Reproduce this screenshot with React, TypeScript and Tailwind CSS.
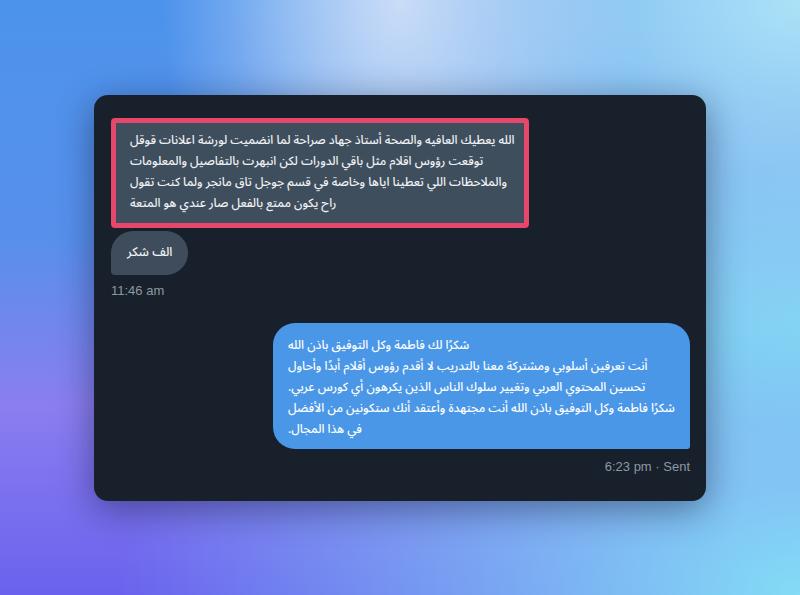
import React from "react";

const font = "font-['Liberation_Sans','DejaVu_Sans',Arial,sans-serif]";
const arabic = "font-['Noto_Sans_Arabic','Noto_Naskh_Arabic','DejaVu_Sans',sans-serif]";

function Lines({ lines }: { lines: string[] }) {
  return (
    <>
      {lines.map((l, i) => (
        <React.Fragment key={i}>
          {l}
          {i < lines.length - 1 && <br />}
        </React.Fragment>
      ))}
    </>
  );
}

export default function App() {
  const redLines = [
    "الله يعطيك العافيه والصحة أستاذ جهاد صراحة لما انضميت لورشة اعلانات قوقل",
    "توقعت رؤوس اقلام مثل باقي الدورات لكن انبهرت بالتفاصيل والمعلومات",
    "والملاحظات اللي تعطينا اياها وخاصة في قسم جوجل تاق مانجر ولما كنت تقول",
    "راح يكون ممتع بالفعل صار عندي هو المتعة",
  ];
  const blueLines = [
    "شكرًا لك فاطمة وكل التوفيق باذن الله",
    "أنت تعرفين أسلوبي ومشتركة معنا بالتدريب لا أقدم رؤوس أقلام أبدًا وأحاول",
    "تحسين المحتوي العربي وتغيير سلوك الناس الذين يكرهون أي كورس عربي.",
    "شكرًا فاطمة وكل التوفيق باذن الله أنت مجتهدة وأعتقد أنك ستكونين من الأفضل",
    "في هذا المجال.",
  ];
  return (
    <div
      className={`${font} w-[800px] h-[595px] flex items-center justify-center bg-[radial-gradient(ellipse_at_50%_0%,#cadcf7_0%,rgba(202,220,247,0)_42%),radial-gradient(ellipse_at_100%_0%,#ace2f7_0%,rgba(172,226,247,0)_50%),radial-gradient(ellipse_at_100%_100%,#84dcf6_0%,rgba(132,220,246,0)_60%),radial-gradient(ellipse_at_100%_55%,#6cc4f0_0%,rgba(108,196,240,0)_35%),linear-gradient(180deg,#4c93ec_0%,#5790ec_40%,#8a7ef0_68%,#6a62ee_100%)] overflow-hidden`}
    >
      <div className="w-[612px] h-[406px] rounded-[14px] bg-[#18202b] shadow-[0_8px_36px_rgba(10,15,40,0.45)] px-4 pt-[23px] flex flex-col">
        <div className="flex flex-col items-start">
          <div className="ml-px w-[418px] border-[5px] border-[#e6476b] rounded-[4px] bg-[#3f4e5d] pl-[14px] pt-[7px] pb-[9px]">
            <div dir="rtl" className={`${arabic} font-medium text-[12px] leading-[21px] text-[#f0f2f5] whitespace-nowrap text-left`}>
              <Lines lines={redLines} />
            </div>
          </div>
          <div dir="rtl" className={`${arabic} font-medium mt-[3px] ml-px h-[44px] px-[16px] flex items-center bg-[#3e4c5b] rounded-tr-[22px] rounded-tl-[22px] rounded-br-[22px] rounded-bl-[4px] text-[12.5px] text-[#f0f2f5]`}>
            الف شكر
          </div>
          <div className="mt-[7px] ml-px text-[13px] leading-[18px] text-[#8b98a5]">11:46 am</div>
        </div>
        <div className="mt-[23px] flex flex-col items-end">
          <div className="w-[417px] bg-[#4a97e8] rounded-tl-[22px] rounded-tr-[22px] rounded-bl-[22px] rounded-br-[3px] pl-[15px] pt-[12px] pb-[9px]">
            <div dir="rtl" className={`${arabic} font-medium text-[12px] leading-[21px] text-white whitespace-nowrap text-left`}>
              <Lines lines={blueLines} />
            </div>
          </div>
          <div className="mt-[9px] text-[13px] leading-[18px] text-[#8b98a5]">6:23 pm · Sent</div>
        </div>
      </div>
    </div>
  );
}
